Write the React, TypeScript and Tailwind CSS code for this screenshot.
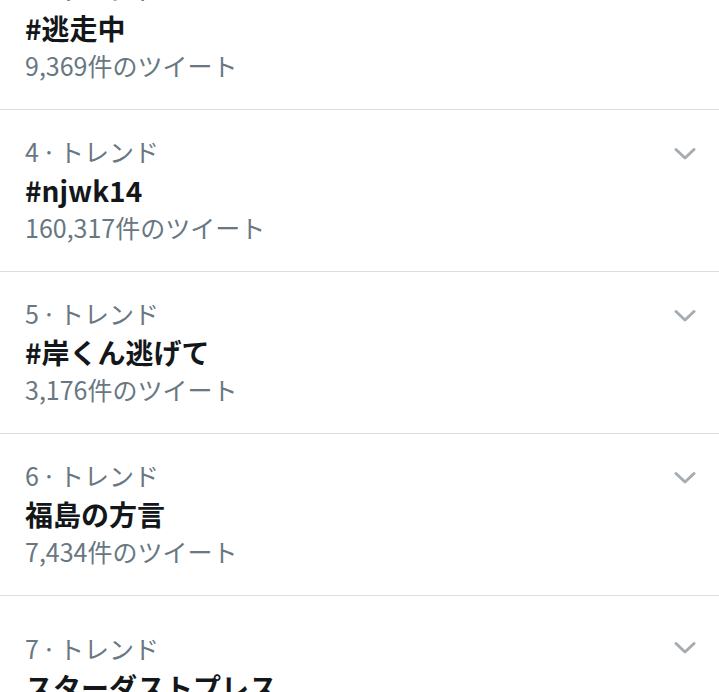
import { ReactNode } from "react";

type Trend = {
    rank: number;
    title: string;
    count?: string;
};

const trends: Trend[] = [
    { rank: 3, title: "#逃走中", count: "9,369件のツイート" },
    { rank: 4, title: "#njwk14", count: "160,317件のツイート" },
    { rank: 5, title: "#岸くん逃げて", count: "3,176件のツイート" },
    { rank: 6, title: "福島の方言", count: "7,434件のツイート" },
    { rank: 7, title: "スターダストプレス", count: "1,021件のツイート" },
];

function Chevron() {
    return (
        <svg width="22" height="14" viewBox="0 0 22 14" className="shrink-0">
            <path d="M2 2.5 L11 11 L20 2.5" fill="none" stroke="#a5adb3" strokeWidth="3" strokeLinecap="round" strokeLinejoin="round" />
        </svg>
    );
}

function Row({ trend, children }: { trend: Trend; children?: ReactNode }) {
    const isLast = trend.rank === 7;
    return (
        <div className={`flex border-b border-[#dcdfe1] pl-[25px] pr-[23px] ${isLast ? "pt-[36px]" : "pt-[25px]"} pb-[28px]`}>
            <div className="flex-1 min-w-0">
                <p className="text-[25px] leading-[32px] text-[#687782]">
                    {trend.rank}<span className="mx-[3px]">·</span>トレンド
                </p>
                <h3 className="mt-[6px] text-[28px] leading-[34px] font-bold text-[#14171a]">{trend.title}</h3>
                <p className="mt-[4px] text-[25px] leading-[32px] text-[#687782]">{trend.count}</p>
                {children}
            </div>
            <div className={isLast ? "pt-[9px]" : "pt-[12px]"}>
                <Chevron />
            </div>
        </div>
    );
}

export default function App() {
    return (
        <div className="w-[719px] h-[692px] overflow-hidden bg-white" style={{ fontFamily: '"Noto Sans CJK JP", "Noto Sans", sans-serif' }}>
            <div className="-mt-[52px]">
                {trends.map((t) => (
                    <Row key={t.rank} trend={t} />
                ))}
            </div>
        </div>
    );
}
